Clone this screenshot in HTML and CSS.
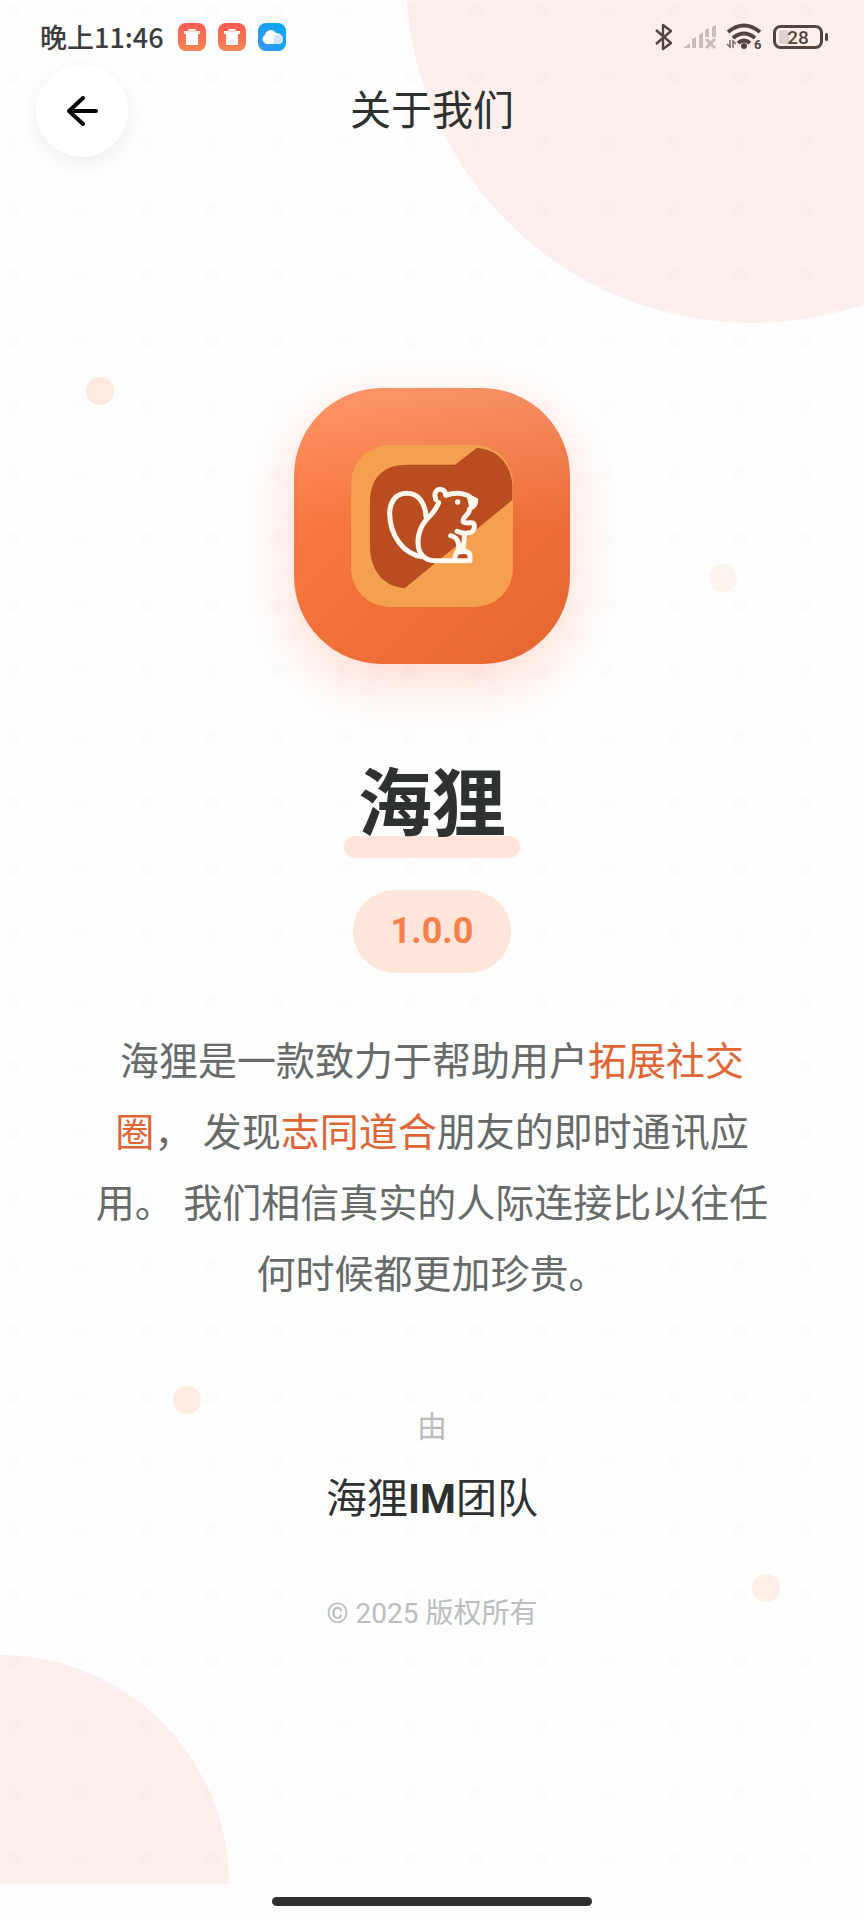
FILE: index.html
```html
<!DOCTYPE html>
<html lang="zh-CN">
<head>
<meta charset="utf-8">
<meta name="viewport" content="width=device-width, initial-scale=1">
<title>关于我们</title>
<link rel="stylesheet" href="styles.css">
</head>
<body>
<div class="screen">
  <div class="backdrop" aria-hidden="true">
    <span class="blob blob-top"></span>
    <span class="blob blob-bottom"></span>
    <span class="dot dot-a"></span>
    <span class="dot dot-b"></span>
    <span class="dot dot-c"></span>
    <span class="dot dot-d"></span>
  </div>

  <div class="status">
    <span class="clock">晚上11:46</span>
    <div class="notices">
      <svg class="notice" viewBox="0 0 28 28" aria-hidden="true">
        <defs><linearGradient id="red" x1="0" y1="0" x2="0" y2="1"><stop offset="0" stop-color="#fa5b50"/><stop offset="1" stop-color="#f98757"/></linearGradient></defs>
        <rect width="28" height="28" rx="8" fill="url(#red)"/>
        <path d="M6 8h4l1-2h6l1 2h4v3h-2v10q0 1-1 1H9q-1 0-1-1V11H6z" fill="#fff"/>
        <path d="M10 8h8" stroke="#fbb3a4" stroke-width="1"/>
      </svg>
      <svg class="notice" viewBox="0 0 28 28" aria-hidden="true">
        <rect width="28" height="28" rx="8" fill="url(#red)"/>
        <path d="M6 8h4l1-2h6l1 2h4v3h-2v10q0 1-1 1H9q-1 0-1-1V11H6z" fill="#fff"/>
        <path d="M10 8h8" stroke="#fbb3a4" stroke-width="1"/>
      </svg>
      <svg class="notice" viewBox="0 0 28 28" aria-hidden="true">
        <defs><linearGradient id="blue" x1="0" y1="1" x2="1" y2="0"><stop offset="0" stop-color="#3596f3"/><stop offset="1" stop-color="#05a9f5"/></linearGradient></defs>
        <rect width="28" height="28" rx="8" fill="url(#blue)"/>
        <path d="M8 21a5 5 0 0 1-1-9 6 6 0 0 1 11-2c4 0 7 3 7 6 0 3-2 5-5 5z" fill="#fff"/>
        <path d="M17 13c4-2 8 0 8 3 0 3-2 5-5 5h-6c3-1 1-6 3-8z" fill="#cfe4ff"/>
      </svg>
    </div>
    <div class="signals">
      <svg width="20" height="28" viewBox="0 0 20 28" aria-hidden="true"><path d="M2 7l15 13-8 6V2l8 6L2 21" fill="none" stroke="#54433f" stroke-width="2.4" stroke-linejoin="round"/></svg>
      <svg width="34" height="28" viewBox="0 0 34 28" aria-hidden="true"><path d="M0 25l7-5v5zM9 16l4-2v11H9zM16 12l4-3v16h-4zM22 7l4-2v9h-4zM29 4l4-2v12h-4z" fill="#cbbbb7"/><path d="M23 16l9 9M32 16l-9 9" stroke="#cbbbb7" stroke-width="3"/></svg>
      <svg width="38" height="30" viewBox="0 0 38 30" aria-hidden="true"><g fill="none" stroke="#54433f" stroke-width="4"><path d="M2 10q16-13 32 0"/><path d="M7 16q11-9 22 0"/><path d="M12 21q6-5 12 0"/></g><circle cx="18" cy="24" r="3" fill="#54433f"/><path d="M1 22l3 3v-7M7 26v-7l3 3" fill="none" stroke="#7b6b67" stroke-width="1.5"/><text x="28" y="27" class="wifi-gen">6</text></svg>
      <svg width="56" height="28" viewBox="0 0 56 28" aria-hidden="true"><rect x="1.5" y="3.5" width="47" height="21" rx="6" fill="none" stroke="#54433f" stroke-width="3"/><rect x="6" y="7" width="10" height="14" rx="3" fill="#dfd1ce"/><rect x="52" y="10" width="3" height="8" rx="1.5" fill="#54433f"/><text x="25" y="21" text-anchor="middle" class="charge">28</text></svg>
    </div>
  </div>

  <header class="topbar">
    <button class="back" type="button" aria-label="返回">
      <svg width="36" height="36" viewBox="0 0 36 36" aria-hidden="true"><path d="M32 18H5M19 5L5 18l14 13" fill="none" stroke="#000" stroke-width="4" stroke-linecap="round" stroke-linejoin="round"/></svg>
    </button>
    <h1 class="heading">关于我们</h1>
  </header>

  <main class="about">
    <div class="logo">
      <svg class="mark" viewBox="248 223 486 486" role="img" aria-label="海狸">
        <rect x="248" y="223" width="486" height="486" rx="116" fill="#f4a04f"/>
        <path d="M626 231C690 236 730 284 732 345V388L410 652C348 650 304 600 305 525V385C310 315 350 282 415 282H560Z" fill="#ba4d1f"/>
        <path d="M566 570V548C585 538 605 542 605 556V570ZM566 490L589 488L584 532Z" fill="#ba4d1f"/>
        <g fill="none" stroke="#fff8ef" stroke-width="15" stroke-linecap="round" stroke-linejoin="round">
          <path d="M473 438C471 395 449 368 415 368C382 368 364 394 364 430C365 492 404 551 462 558"/>
          <path d="M511 396C505 410 500 419 490 430C470 450 449 473 449 515C449 548 468 570 500 570H605V556C605 542 589 540 571 544"/>
          <path d="M502 386C494 361 510 353 521 357C529 360 532 366 532 374C563 363 593 367 609 382L622 388C623 401 614 409 604 414C604 436 581 434 585 454C597 463 619 446 618 469C617 490 588 492 566 482"/>
          <path d="M547 495C572 500 577 530 564 548L557 568M589 490L585 532"/>
          <path d="M604 381L617 387L609 404Z" fill="#fff8ef"/>
        </g>
        <circle cx="568" cy="394" r="8" fill="#fff8ef"/>
      </svg>
    </div>
    <h2 class="name">海狸</h2>
    <p class="version">1.0.0</p>
    <p class="intro">海狸是一款致力于帮助用户<em>拓展社交圈</em>， 发现<em>志同道合</em>朋友的即时通讯应用。 我们相信真实的人际连接比以往任何时候都更加珍贵。</p>
    <p class="by">由</p>
    <p class="team">海狸<b>IM</b>团队</p>
    <p class="copyright">© 2025 版权所有</p>
  </main>

  <footer class="gesture"><span class="handle"></span></footer>
</div>
</body>
</html>
```
FILE: styles.css
```css
* { box-sizing: border-box; }

body {
  margin: 0;
  background: #fefefe;
  color: #2d3130;
  font-family: Roboto, "Noto Sans CJK SC", sans-serif;
}

h1, h2, p { margin: 0; }

.screen {
  position: relative;
  display: flex;
  flex-direction: column;
  min-height: 100vh;
}

/* Decorative layer behind the content */
.backdrop {
  position: absolute;
  inset: 0 0 36px;
  overflow: hidden;
  background-image: radial-gradient(circle, #fbfbfb 4px, transparent 10px);
  background-size: 66px 66px;
  background-position: 47px 44px;
}

.blob, .dot {
  position: absolute;
  border-radius: 50%;
}

.blob { background: rgba(250, 112, 67, 0.1); }

.blob-top {
  top: -369px;
  right: -234px;
  width: 692px;
  height: 692px;
}

.blob-bottom {
  bottom: -229px;
  left: -229px;
  width: 458px;
  height: 458px;
}

.dot {
  width: 28px;
  height: 28px;
  background: #ffe8df;
}

.dot-a { top: 377px; left: 86px; }
.dot-b { top: 564px; right: 127px; background: #fff3ee; }
.dot-c { bottom: 470px; left: 173px; background: #ffebe2; }
.dot-d { bottom: 282px; right: 84px; background: #ffeee5; }

/* Phone status bar */
.status {
  position: relative;
  display: flex;
  align-items: center;
  height: 65px;
  padding: 8px 35px 0 40px;
}

.clock {
  font: 500 27px/32px "Noto Sans CJK SC", sans-serif;
  color: #3c3c3c;
}

.notices {
  display: flex;
  gap: 12px;
  margin-left: 14px;
}

.notice {
  width: 28px;
  height: 28px;
}

.signals {
  display: flex;
  align-items: center;
  gap: 9px;
  margin-left: auto;
}

.wifi-gen {
  font: 700 13px Roboto, sans-serif;
  fill: #54433f;
}

.charge {
  font: 500 19px Roboto, sans-serif;
  fill: #54433f;
}

.topbar {
  position: relative;
  display: grid;
  grid-template-columns: 92px 1fr 92px;
  align-items: center;
  padding: 0 36px;
}

.back {
  display: grid;
  place-items: center;
  width: 92px;
  height: 92px;
  padding: 0;
  border: 0;
  border-radius: 50%;
  background: #fff;
  box-shadow: 0 6px 24px rgba(0, 0, 0, 0.07);
}

.heading {
  font-size: 41px;
  line-height: 60px;
  font-weight: 400;
  text-align: center;
}

.about {
  position: relative;
  display: flex;
  flex: 1;
  flex-direction: column;
  align-items: center;
  padding: 231px 88px 0;
  text-align: center;
}

.logo {
  display: grid;
  place-items: center;
  width: 276px;
  height: 276px;
  border-radius: 88px;
  background:
    linear-gradient(rgba(255, 255, 255, 0.2), rgba(255, 255, 255, 0) 50%),
    linear-gradient(135deg, #ff7d45, #e56530);
  box-shadow: 0 18px 60px rgba(255, 112, 67, 0.26);
}

.mark {
  width: 162px;
  height: 162px;
}

.name {
  position: relative;
  z-index: 0;
  margin-top: 95px;
  padding: 0 14px;
  font-size: 74px;
  line-height: 92px;
  font-weight: 700;
}

.name::after {
  content: "";
  position: absolute;
  z-index: -1;
  right: 0;
  bottom: -7px;
  left: 0;
  height: 22px;
  border-radius: 11px;
  background: #ffe5d9;
}

.version {
  margin-top: 39px;
  padding: 0 38px;
  border-radius: 42px;
  background: #ffe6db;
  color: #f5804b;
  font-size: 36px;
  line-height: 83px;
  font-weight: 700;
}

.intro {
  margin-top: 54px;
  color: #666a69;
  font-size: 39px;
  line-height: 71px;
}

.intro em {
  color: #e06434;
  font-style: normal;
}

.by {
  margin-top: 94px;
  color: #bbb;
  font-size: 30px;
  line-height: 44px;
}

.team {
  margin-top: 20px;
  font-size: 41px;
  line-height: 60px;
}

.copyright {
  margin-top: 65px;
  color: #bbbdbf;
  font-size: 28px;
  line-height: 40px;
}

.gesture {
  position: relative;
  display: flex;
  justify-content: center;
  height: 36px;
  padding-top: 13px;
}

.handle {
  width: 37%;
  height: 9px;
  border-radius: 5px;
  background: #303030;
}
```
